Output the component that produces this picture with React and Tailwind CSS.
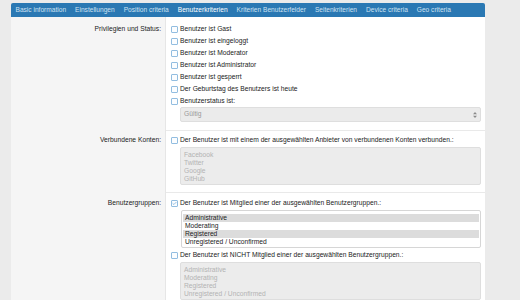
import { Check } from "lucide-react"

const tabs = [
    'Basic information',
    'Einstellungen',
    'Position criteria',
    'Benutzerkriterien',
    'Kriterien Benutzerfelder',
    'Seitenkriterien',
    'Device criteria',
    'Geo criteria',
]

const privileges = [
    'Benutzer ist Gast',
    'Benutzer ist eingeloggt',
    'Benutzer ist Moderator',
    'Benutzer ist Administrator',
    'Benutzer ist gesperrt',
    'Der Geburtstag des Benutzers ist heute',
    'Benutzerstatus ist:',
]

const groups = ['Administrative', 'Moderating', 'Registered', 'Unregistered / Unconfirmed']

function Box({ checked }) {
    return (
        <span className="w-[7px] h-[7px] shrink-0 rounded-[1px] border border-[#92bde0] bg-[#fbfdff] flex items-center justify-center">
            {checked && <Check size={5} strokeWidth={3} className="text-[#5b9bd0]" />}
        </span>
    )
}

function CheckRow({ label, checked }) {
    return (
        <div className="flex items-center h-[12px] pl-[5px] gap-[2px] text-[#222]">
            <Box checked={checked} />
            <span>{label}</span>
        </div>
    )
}

function ListBox({ items, disabled, selected = [] }) {
    return (
        <div
            className={
                disabled
                    ? "ml-[14px] mr-[4px] h-[38px] rounded-[2px] border border-[#dedede] bg-[#ececec] pt-[3px] px-[3px] leading-[8px] text-[#b3b3b3]"
                    : "ml-[15px] mr-[4px] h-[38px] rounded-[2px] border border-[#d6d6d6] bg-white pt-[3px] px-[1px] leading-[8px] text-[#222]"
            }
        >
            {items.map((item) => (
                <div key={item} className={selected.includes(item) ? "bg-[#dcdcdc] px-[2px]" : disabled ? "" : "px-[2px]"}>
                    {item}
                </div>
            ))}
        </div>
    )
}

function Section({ label, children, top, bottom, last }) {
    return (
        <div className="flex">
            <div className={`w-[155px] shrink-0 bg-[#f5f5f5] border-r border-[#e6e6e6] text-right pr-[4px] text-[#222] ${top}`}>
                <div className="h-[12px] leading-[12px]">{label}</div>
            </div>
            <div className={`flex-1 bg-white ${top} ${bottom} ${last ? '' : 'border-b border-[#e9e9e9]'}`}>
                {children}
            </div>
        </div>
    )
}

export default function App() {
    return (
        <div
            className="w-[520px] h-[300px] overflow-hidden bg-[#ebebeb] pl-[11px] pt-[3px] text-[6.7px]"
            style={{ fontFamily: '"Liberation Sans", Arial, sans-serif' }}
        >
            <div className="w-[474px]">
                <div className="h-[14px] bg-[#2a78b3] rounded-t-[2px] flex items-center text-[6.6px]">
                    {tabs.map((tab) => (
                        <span
                            key={tab}
                            className={tab === 'Benutzerkriterien' ? "px-[4.5px] text-white" : "px-[4.5px] text-[#cfe2f2]"}
                        >
                            {tab}
                        </span>
                    ))}
                </div>

                <Section label="Privilegien und Status:" top="pt-[6px]" bottom="pb-[8px]">
                    {privileges.map((p) => (
                        <CheckRow key={p} label={p} />
                    ))}
                    <div className="ml-[14px] mr-[4px] h-[15px] rounded-[2px] border border-[#dedede] bg-[#ebebeb] flex items-center justify-between px-[3px] text-[#9a9a9a]">
                        <span>Gültig</span>
                        <svg width="4" height="6" viewBox="0 0 4 6">
                            <path d="M2 0 L4 2.2 L0 2.2 Z M2 6 L4 3.8 L0 3.8 Z" fill="#8a8a8a" />
                        </svg>
                    </div>
                </Section>

                <Section label="Verbundene Konten:" top="pt-[3px]" bottom="pb-[7px]">
                    <CheckRow label="Der Benutzer ist mit einem der ausgewählten Anbieter von verbundenen Konten verbunden.:" />
                    <div className="mt-[1px]">
                        <ListBox items={['Facebook', 'Twitter', 'Google', 'GitHub']} disabled />
                    </div>
                </Section>

                <Section label="Benutzergruppen:" top="pt-[4px]" bottom="pb-[4px]" last>
                    <CheckRow label="Der Benutzer ist Mitglied einer der ausgewählten Benutzergruppen.:" checked />
                    <div className="mt-[1px]">
                        <ListBox items={groups} selected={['Administrative', 'Registered']} />
                    </div>
                    <div className="mt-[1px]">
                        <CheckRow label="Der Benutzer ist NICHT Mitglied einer der ausgewählten Benutzergruppen.:" />
                    </div>
                    <div className="mt-[1px]">
                        <ListBox items={groups} disabled />
                    </div>
                </Section>
            </div>
        </div>
    )
}
